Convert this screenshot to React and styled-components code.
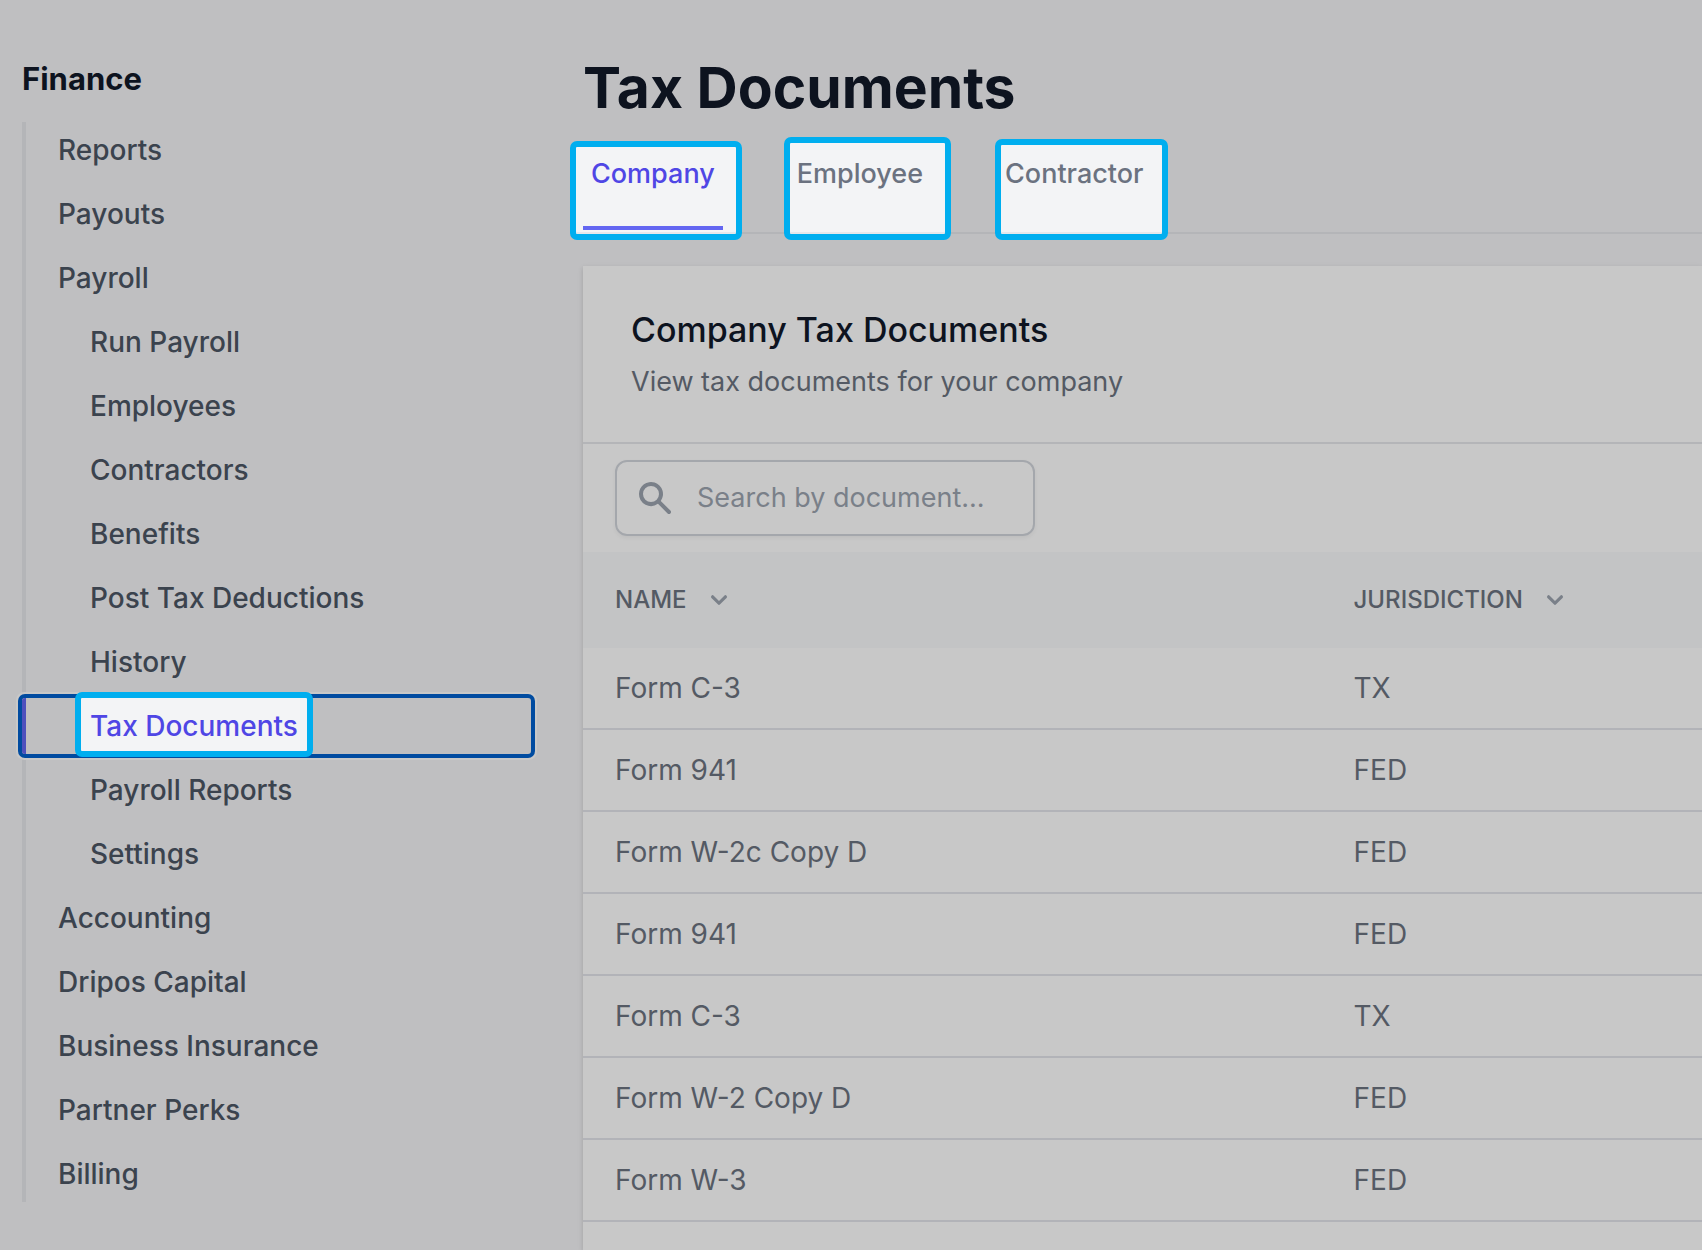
import styled, { createGlobalStyle, css } from "styled-components";
import React, { useState } from "react";

const navItems = [
  { name: "Reports" },
  { name: "Payouts" },
  { name: "Payroll" },
  { name: "Run Payroll", nested: true },
  { name: "Employees", nested: true },
  { name: "Contractors", nested: true },
  { name: "Benefits", nested: true },
  { name: "Post Tax Deductions", nested: true },
  { name: "History", nested: true },
  { name: "Tax Documents", nested: true, current: true },
  { name: "Payroll Reports", nested: true },
  { name: "Settings", nested: true },
  { name: "Accounting" },
  { name: "Dripos Capital" },
  { name: "Business Insurance" },
  { name: "Partner Perks" },
  { name: "Billing" },
];

// frame = how far the highlight reaches past the tab: top right bottom left
const tabs = [
  { name: "Company", frame: "-13px -19px -14px -13px" },
  { name: "Employee", frame: "-17px -20px -14px -5px" },
  { name: "Contractor", frame: "-15px -16px -14px -2px" },
];

const documents = [
  { name: "Form C-3", jurisdiction: "TX" },
  { name: "Form 941", jurisdiction: "FED" },
  { name: "Form W-2c Copy D", jurisdiction: "FED" },
  { name: "Form 941", jurisdiction: "FED" },
  { name: "Form C-3", jurisdiction: "TX" },
  { name: "Form W-2 Copy D", jurisdiction: "FED" },
  { name: "Form W-3", jurisdiction: "FED" },
];

const Chevron = () => (
  <svg width="32" height="32" viewBox="0 0 20 20" fill="currentColor" aria-hidden="true">
    <path
      fillRule="evenodd"
      clipRule="evenodd"
      d="M5.293 7.293a1 1 0 011.414 0L10 10.586l3.293-3.293a1 1 0 111.414 1.414l-4 4a1 1 0 01-1.414 0l-4-4a1 1 0 010-1.414z"
    />
  </svg>
);

const SearchIcon = () => (
  <svg width="40" height="40" viewBox="0 0 20 20" fill="currentColor" aria-hidden="true">
    <path
      fillRule="evenodd"
      clipRule="evenodd"
      d="M8 4a4 4 0 100 8 4 4 0 000-8zM2 8a6 6 0 1110.89 3.476l4.817 4.817a1 1 0 01-1.414 1.414l-4.816-4.816A6 6 0 012 8z"
    />
  </svg>
);

export default function App() {
  const [tab, setTab] = useState("Company");
  const [search, setSearch] = useState("");
  const rows = documents.filter((doc) =>
    doc.name.toLowerCase().includes(search.toLowerCase())
  );

  return (
    <>
      <GlobalStyle />
      <Page>
        <Sidebar>
          <SidebarTitle>Finance</SidebarTitle>
          <NavList>
            {navItems.map((item) => (
              <li key={item.name}>
                <NavLink href="#" $nested={item.nested} $current={item.current}>
                  {item.current ? <NavLabel>{item.name}</NavLabel> : item.name}
                </NavLink>
              </li>
            ))}
          </NavList>
        </Sidebar>
        <Main>
          <Title>Tax Documents</Title>
          <Tabs>
            {tabs.map((item) => (
              <Tab
                key={item.name}
                type="button"
                $frame={item.frame}
                $active={item.name === tab}
                onClick={() => setTab(item.name)}
              >
                {item.name}
              </Tab>
            ))}
          </Tabs>
          <Card>
            <CardHeader>
              <CardTitle>Company Tax Documents</CardTitle>
              <CardText>View tax documents for your company</CardText>
            </CardHeader>
            <Toolbar>
              <SearchBox>
                <SearchIcon />
                <SearchInput
                  type="text"
                  aria-label="Search by document"
                  placeholder="Search by document..."
                  value={search}
                  onChange={(e) => setSearch(e.target.value)}
                />
              </SearchBox>
            </Toolbar>
            <Table>
              <thead>
                <tr>
                  <HeadCell $width="66%">
                    <SortButton type="button">
                      Name
                      <Chevron />
                    </SortButton>
                  </HeadCell>
                  <HeadCell $width="34%">
                    <SortButton type="button">
                      Jurisdiction
                      <Chevron />
                    </SortButton>
                  </HeadCell>
                </tr>
              </thead>
              <tbody>
                {rows.map((doc, i) => (
                  <tr key={i}>
                    <Cell>{doc.name}</Cell>
                    <Cell>{doc.jurisdiction}</Cell>
                  </tr>
                ))}
              </tbody>
            </Table>
          </Card>
        </Main>
      </Page>
    </>
  );
}

const GlobalStyle = createGlobalStyle`
  * {
    box-sizing: border-box;
  }
  body {
    margin: 0;
    background-color: #bfbfc1;
    font-family: Inter, "Liberation Sans", sans-serif;
    font-size: 28px;
    line-height: 40px;
    -webkit-font-smoothing: antialiased;
  }
  button,
  input {
    font: inherit;
  }
`;

const highlight = css`
  content: "";
  position: absolute;
  z-index: -1;
  border: 6px solid #00aeef;
  border-radius: 7px;
  background-color: #f3f4f6;
`;

const Page = styled.div`
  display: grid;
  grid-template-columns: 583px 1fr;
  min-height: 100vh;
`;

const Sidebar = styled.nav`
  padding: 56px 52px 48px 22px;
`;

const SidebarTitle = styled.h2`
  margin: 0 0 20px;
  font-size: 31px;
  line-height: 46px;
  font-weight: 700;
  color: #0d131f;
`;

const NavList = styled.ul`
  display: flex;
  flex-direction: column;
  gap: 8px;
  margin: 0;
  padding: 0;
  list-style: none;
  box-shadow: inset 4px 0 #b4b5b8;
`;

const NavLink = styled.a`
  position: relative;
  z-index: 0;
  display: block;
  padding: 8px 0 8px ${(props) => (props.$nested ? "64px" : "32px")};
  border-left: 4px solid transparent;
  font-weight: 500;
  color: #3b434e;
  text-decoration: none;
  ${(props) =>
    props.$current &&
    css`
      border-left-color: #4e50bd;
      border-radius: 3px;
      color: #4f46e5;
      box-shadow: 0 0 0 4px #004ba0, 0 0 0 6px #c8c8c8;
    `}
`;

const NavLabel = styled.span`
  position: relative;
  z-index: 0;
  display: inline-block;
  vertical-align: top;
  &::before {
    ${highlight}
    inset: -14px -15px -11px -15px;
  }
`;

const Main = styled.main`
  display: flex;
  flex-direction: column;
  min-width: 0;
  padding-top: 52px;
`;

const Title = styled.h1`
  margin: 0 0 30px;
  font-size: 57px;
  line-height: 72px;
  font-weight: 700;
  color: #0d131f;
`;

const Tabs = styled.div`
  position: relative;
  z-index: 0;
  display: flex;
  gap: 66px;
  padding-bottom: 2px;
  border-bottom: 2px solid #b4b5b8;
`;

const Tab = styled.button`
  position: relative;
  padding: 0 8px 32px;
  border: none;
  border-bottom: 4px solid ${(props) => (props.$active ? "#6366f1" : "transparent")};
  background: none;
  font-size: 27px;
  font-weight: 500;
  color: ${(props) => (props.$active ? "#4f46e5" : "#6b7280")};
  cursor: pointer;
  &::before {
    ${highlight}
    inset: ${(props) => props.$frame};
    box-shadow: inset 0 -2px #e5e7eb;
  }
`;

const Card = styled.section`
  flex: 1;
  margin-top: 32px;
  background-color: #c8c8c8;
  box-shadow: 0 2px 6px rgba(0, 0, 0, 0.1), 0 2px 4px rgba(0, 0, 0, 0.06);
`;

const CardHeader = styled.header`
  padding: 40px 48px;
  border-bottom: 2px solid #b4b5b8;
`;

const CardTitle = styled.h3`
  margin: 0 0 8px;
  font-size: 34px;
  line-height: 48px;
  font-weight: 500;
  color: #0d131f;
`;

const CardText = styled.p`
  margin: 0;
  font-size: 27px;
  color: #545a64;
`;

const Toolbar = styled.div`
  padding: 16px 32px;
`;

const SearchBox = styled.label`
  display: flex;
  align-items: center;
  gap: 22px;
  width: 420px;
  height: 76px;
  padding: 0 18px;
  border: 2px solid #a4a7ac;
  border-radius: 12px;
  box-shadow: 0 2px 4px rgba(0, 0, 0, 0.05);
  font-size: 27px;
  color: #7a8089;
`;

const SearchInput = styled.input`
  flex: 1;
  min-width: 0;
  padding: 0;
  border: none;
  outline: none;
  background: none;
  color: #0d131f;
  &::placeholder {
    color: #7a8089;
  }
`;

const Table = styled.table`
  width: 100%;
  table-layout: fixed;
  border-collapse: separate;
  border-spacing: 0;
`;

const HeadCell = styled.th`
  width: ${(props) => props.$width};
  height: 96px;
  padding: 0 32px;
  background-color: #c3c4c5;
  text-align: left;
`;

const SortButton = styled.button`
  display: flex;
  align-items: center;
  gap: 16px;
  padding: 0;
  border: none;
  background: none;
  font-size: 24px;
  line-height: 32px;
  font-weight: 500;
  text-transform: uppercase;
  color: #545a64;
  cursor: pointer;
  svg {
    color: #7a8089;
  }
`;

const Cell = styled.td`
  padding: 20px 32px;
  border-bottom: 2px solid #b2b3b8;
  color: #545a64;
`;
